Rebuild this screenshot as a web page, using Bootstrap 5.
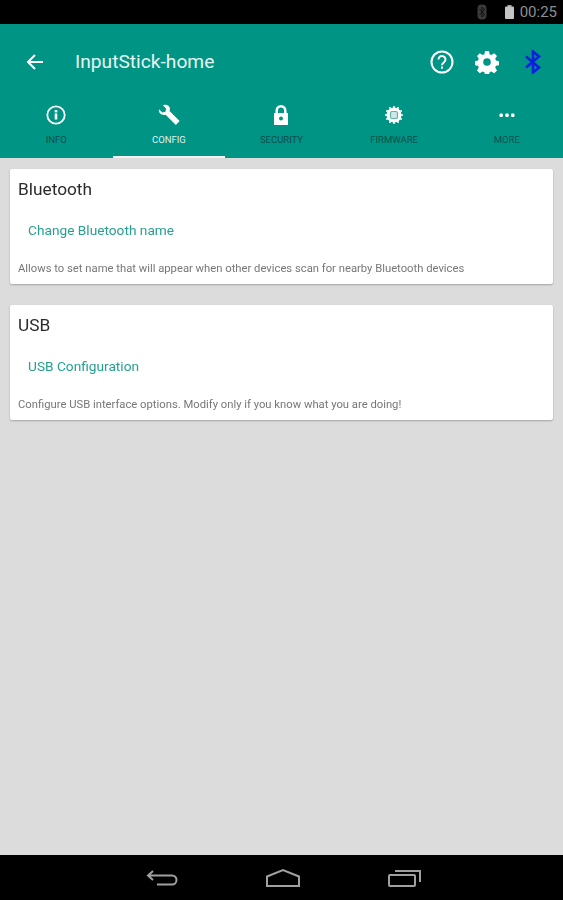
<!DOCTYPE html>
<html lang="en">

<head>
  <meta charset="UTF-8">
  <title>InputStick-home</title>
  <link href="https://cdn.jsdelivr.net/npm/bootstrap@5.3.3/dist/css/bootstrap.min.css" rel="stylesheet">
  <style>
    html, body { height: 100%; }
    body { background: #dcdcdc; font-family: Roboto, "Liberation Sans", sans-serif; overflow: hidden; }
    .screen { height: 900px; filter: blur(.45px); }
    .status-bar { height: 24px; background: #000; color: #8f8f8f; font-size: 15px; padding-right: 6px; gap: 6px; flex: none; }
    .bt-status { margin-right: 12px; }
    .app-head { height: 134px; background: #009485; flex: none; }
    .tool-row { height: 76px; padding: 0 21px 0 25px; }
    .app-title { color: #e6f4f1; font-size: 19.2px; margin-left: 30px; line-height: 1; }
    .help-icon { margin-right: 21px; }
    .gear-icon { margin-right: 25px; }
    .tab-row { height: 58px; }
    .tab-item { flex: 1 1 0; height: 58px; padding-top: 4px; color: #0b4f4a; font-size: 9.5px; line-height: 1; border-bottom: 2px solid transparent; }
    .tab-item svg { display: block; height: 22px; margin-bottom: 9px; }
    .tab-item.on { color: #dff1ee; border-bottom-color: #f2f2f2; }
    .page-body { padding: 11px 10px 0; gap: 21px; }
    .set-card { height: 115px; background: #fff; border-radius: 2px; box-shadow: 0 1px 2px rgba(0, 0, 0, .25); padding: 10px 8px 0; }
    .set-title { color: #2b2b2b; font-size: 17.3px; line-height: 20px; }
    .set-link { color: #26a08f; font-size: 13.7px; line-height: 16px; margin: 23px 0 0 10px; }
    .set-note { color: #777; font-size: 11.25px; line-height: 12px; margin-top: 25px; }
    .nav-bar { height: 45px; background: #000; gap: 87px; flex: none; }
  </style>
</head>

<body>
  <div class="screen d-flex flex-column">

    <!-- Status bar -->
    <div class="status-bar d-flex align-items-center justify-content-end">
      <svg width="10" height="16" viewBox="0 0 10 16" class="bt-status">
        <rect x="0.5" y="0.5" width="9" height="15" rx="4" fill="#3a3a3a"/>
        <path d="M2.500 5l5 5.500-2.500 2.500v-10l2.500 2.500-5 5.500" fill="none" stroke="#111" stroke-width="1"/>
      </svg>
      <svg width="9" height="14" viewBox="0 0 9 14">
        <rect x="2.500" y="0" width="4" height="2" fill="#a8a8a8"/>
        <rect x="0" y="1.500" width="9" height="12.500" rx="1" fill="#c4c4c4"/>
      </svg>
      <span>00:25</span>
    </div>

    <!-- Toolbar and tabs -->
    <div class="app-head">
      <div class="tool-row d-flex align-items-center">
        <svg width="20" height="20" viewBox="0 0 20 20">
          <path d="M18 10H3M10 3l-7 7 7 7" fill="none" stroke="#fff" stroke-width="2"/>
        </svg>
        <div class="app-title">InputStick-home</div>
        <div class="d-flex align-items-center ms-auto">
          <svg width="24" height="24" viewBox="0 0 24 24" class="help-icon">
            <circle cx="12" cy="12" r="10.500" fill="none" stroke="#fff" stroke-width="2"/>
            <path d="M8.500 9.500a3.500 3.500 0 1 1 5.500 2.800c-1.200.9-2 1.400-2 3" fill="none" stroke="#fff" stroke-width="2"/>
            <rect x="11" y="16.500" width="2" height="2.200" fill="#fff"/>
          </svg>
          <svg width="24" height="24" viewBox="0 0 24 24" class="gear-icon">
            <path fill="#fff" fill-rule="evenodd" d="M10 1h4l.6 3.200 1.800.8 2.800-1.800 2.800 2.800-1.800 2.800.8 1.800 3 .6v4l-3 .6-.8 1.800 1.800 2.800-2.800 2.800-2.800-1.800-1.800.8-.6 3h-4l-.6-3-1.800-.8-2.800 1.800-2.800-2.800 1.800-2.800-.8-1.800-3-.6v-4l3-.6.8-1.800-1.800-2.800 2.800-2.800 2.800 1.800 1.800-.8zM12 8.200a3.800 3.800 0 1 0 0 7.600 3.800 3.800 0 0 0 0-7.600z"/>
          </svg>
          <svg width="18" height="24" viewBox="0 0 18 24">
            <path d="M2 6.500l13 11-6 5v-21l6 5-13 11" fill="none" stroke="#0a1fe0" stroke-width="2.600"/>
          </svg>
        </div>
      </div>

      <div class="tab-row d-flex">
        <div class="tab-item d-flex flex-column align-items-center">
          <svg width="20" height="20" viewBox="0 0 20 20">
            <circle cx="10" cy="10" r="8.700" fill="none" stroke="#fff" stroke-width="1.800"/>
            <rect x="8.700" y="8.500" width="2.600" height="6" fill="#fff"/>
            <rect x="8.700" y="5" width="2.600" height="2.400" fill="#fff"/>
          </svg>
          <span>INFO</span>
        </div>
        <div class="tab-item on d-flex flex-column align-items-center">
          <svg width="22" height="22" viewBox="0 0 22 22">
            <path fill="#fff" d="M1 5.200 4.400 8.500l3-.8.800-3L5 1.300C7.800.2 10.600 1 11.600 3.300c.5 1.300.4 2.600-.1 3.700L21.600 17l-3.700 3.900L7.600 10.800c-1.200.4-2.500.4-3.700-.2C1.600 9.600.4 7.700 1 5.200z"/>
          </svg>
          <span>CONFIG</span>
        </div>
        <div class="tab-item d-flex flex-column align-items-center">
          <svg width="20" height="20" viewBox="0 0 20 20">
            <path fill="#fff" fill-rule="evenodd" d="M3 8h1.500V5.500a5.500 5.500 0 0 1 11 0V8H17v12H3zM7 8h6V5.500a3 3 0 0 0-6 0zM10 11.500a2 2 0 1 0 0 4 2 2 0 0 0 0-4z"/>
          </svg>
          <span>SECURITY</span>
        </div>
        <div class="tab-item d-flex flex-column align-items-center">
          <svg width="20" height="20" viewBox="0 0 20 20">
            <path d="M6 2v16M10 1v18M14 2v16M2 6h16M1 10h18M2 14h16" stroke="#fff" stroke-width="1.500"/>
            <circle cx="10" cy="10" r="7.500" fill="#fff"/>
            <rect x="6.500" y="6.500" width="7" height="7" rx="1.500" fill="#cfe8e4" stroke="#5fb3a7" stroke-width="1.200"/>
          </svg>
          <span>FIRMWARE</span>
        </div>
        <div class="tab-item d-flex flex-column align-items-center">
          <svg width="20" height="20" viewBox="0 0 20 20">
            <rect x="2.500" y="8.500" width="3.400" height="3.400" rx="1" fill="#fff"/>
            <rect x="8.300" y="8.500" width="3.400" height="3.400" rx="1" fill="#fff"/>
            <rect x="14.100" y="8.500" width="3.400" height="3.400" rx="1" fill="#fff"/>
          </svg>
          <span>MORE</span>
        </div>
      </div>
    </div>

    <!-- Cards -->
    <div class="page-body flex-grow-1 d-flex flex-column">
      <div class="set-card">
        <div class="set-title">Bluetooth</div>
        <div class="set-link">Change Bluetooth name</div>
        <div class="set-note">Allows to set name that will appear when other devices scan for nearby Bluetooth devices</div>
      </div>
      <div class="set-card">
        <div class="set-title">USB</div>
        <div class="set-link">USB Configuration</div>
        <div class="set-note">Configure USB interface options. Modify only if you know what you are doing!</div>
      </div>
    </div>

    <!-- System navigation -->
    <div class="nav-bar d-flex align-items-center justify-content-center">
      <svg width="36" height="20" viewBox="0 0 36 20">
        <path d="M11 3 6 7.500 11 12M6 7.500h24a4.500 4.500 0 0 1 0 9H15" fill="none" stroke="#a0a0a0" stroke-width="2"/>
      </svg>
      <svg width="36" height="20" viewBox="0 0 36 20">
        <path d="M2 18V8.500L18 2l16 6.500V18z" fill="none" stroke="#a0a0a0" stroke-width="2"/>
      </svg>
      <svg width="34" height="20" viewBox="0 0 34 20">
        <rect x="1" y="7" width="26" height="11" rx="1" fill="none" stroke="#a0a0a0" stroke-width="2"/>
        <path d="M7 3h25v11" fill="none" stroke="#a0a0a0" stroke-width="2"/>
      </svg>
    </div>
  </div>

  <script src="https://cdn.jsdelivr.net/npm/bootstrap@5.3.3/dist/js/bootstrap.bundle.min.js"></script>
</body>

</html>
